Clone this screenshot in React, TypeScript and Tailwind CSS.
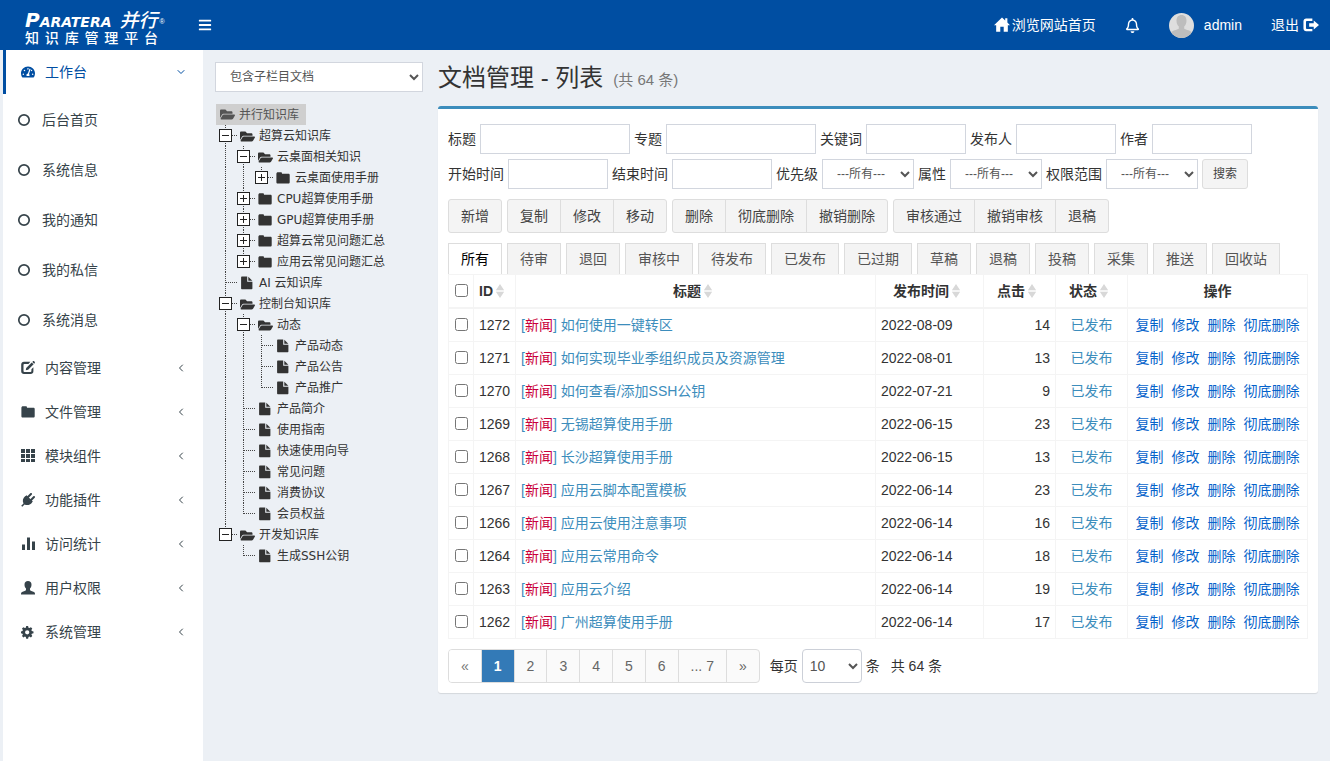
import { useState } from "react";
import type { ReactNode } from "react";
import { FaBars, FaFolderOpen, FaRegBell, FaTachometerAlt } from "react-icons/fa";
import { FiChevronDown, FiChevronLeft } from "react-icons/fi";

interface TreeNode {
  label: string;
  open?: boolean;
  folder?: boolean;
  children?: TreeNode[];
}

interface Doc {
  id: number;
  title: string;
  date: string;
  hits: number;
}

const SUB_MENU = ["后台首页", "系统信息", "我的通知", "我的私信", "系统消息"];

const TREE: TreeNode[] = [
  {
    label: "超算云知识库",
    folder: true,
    open: true,
    children: [
      {
        label: "云桌面相关知识",
        folder: true,
        open: true,
        children: [{ label: "云桌面使用手册", folder: true }],
      },
      { label: "CPU超算使用手册", folder: true },
      { label: "GPU超算使用手册", folder: true },
      { label: "超算云常见问题汇总", folder: true },
      { label: "应用云常见问题汇总", folder: true },
    ],
  },
  { label: "AI 云知识库" },
  {
    label: "控制台知识库",
    folder: true,
    open: true,
    children: [
      {
        label: "动态",
        folder: true,
        open: true,
        children: [{ label: "产品动态" }, { label: "产品公告" }, { label: "产品推广" }],
      },
      { label: "产品简介" },
      { label: "使用指南" },
      { label: "快速使用向导" },
      { label: "常见问题" },
      { label: "消费协议" },
      { label: "会员权益" },
    ],
  },
  {
    label: "开发知识库",
    folder: true,
    open: true,
    children: [{ label: "生成SSH公钥" }],
  },
];

const BUTTON_GROUPS = [
  ["新增"],
  ["复制", "修改", "移动"],
  ["删除", "彻底删除", "撤销删除"],
  ["审核通过", "撤销审核", "退稿"],
];

const TABS = [
  "所有", "待审", "退回", "审核中", "待发布", "已发布", "已过期",
  "草稿", "退稿", "投稿", "采集", "推送", "回收站",
];

const DOCS: Doc[] = [
  { id: 1272, title: "如何使用一键转区", date: "2022-08-09", hits: 14 },
  { id: 1271, title: "如何实现毕业季组织成员及资源管理", date: "2022-08-01", hits: 13 },
  { id: 1270, title: "如何查看/添加SSH公钥", date: "2022-07-21", hits: 9 },
  { id: 1269, title: "无锡超算使用手册", date: "2022-06-15", hits: 23 },
  { id: 1268, title: "长沙超算使用手册", date: "2022-06-15", hits: 13 },
  { id: 1267, title: "应用云脚本配置模板", date: "2022-06-14", hits: 23 },
  { id: 1266, title: "应用云使用注意事项", date: "2022-06-14", hits: 16 },
  { id: 1264, title: "应用云常用命令", date: "2022-06-14", hits: 18 },
  { id: 1263, title: "应用云介绍", date: "2022-06-14", hits: 19 },
  { id: 1262, title: "广州超算使用手册", date: "2022-06-14", hits: 17 },
];

/* ---------- icons ---------- */

function Icon({ children, size = 14 }: { children: ReactNode; size?: number }) {
  return (
    <svg width={size} height={size} viewBox="0 0 14 14" fill="currentColor" className="shrink-0" aria-hidden="true">
      {children}
    </svg>
  );
}

const EditIcon = () => (
  <Icon>
    <path d="M3 .8h6.400L7.500 2.900H3.400c-.6 0-.9.3-.9.9v6.300c0 .6.3.9.9.9h6.100c.6 0 .9-.3.9-.9V8.300l2-2v4c0 1.700-1.100 2.800-2.800 2.800H3c-1.700 0-2.800-1.100-2.800-2.800V3.600C.2 1.900 1.300.8 3 .8z" />
    <path d="M5.200 6.900 10.700 1.400l1.900 1.900-5.500 5.500-2.300.4z" />
    <path d="M11.300.9l.8-.8h.8l1 1v.8l-.8.8z" />
  </Icon>
);

const FolderIcon = () => (
  <Icon>
    <path d="M.4 2.800C.4 1.900 1 1.300 1.900 1.300h3c.6 0 1.100.5 1.100 1.400h6.400c.8 0 1.300.5 1.300 1.300v7.200c0 .8-.5 1.300-1.300 1.300H1.700c-.8 0-1.300-.5-1.300-1.300z" />
  </Icon>
);

const FileIcon = () => (
  <Icon>
    <path d="M1.800.6h5.400v5.200h5.200v6.800c0 .4-.3.7-.7.7H1.800c-.4 0-.7-.3-.7-.7V1.300c0-.4.3-.7.7-.7z" />
    <path d="M8.300.8l4 4h-4z" />
  </Icon>
);

const GridIcon = () => (
  <Icon>
    <path d="M0 0h4v4H0zM5 0h4v4H5zM10 0h4v4h-4zM0 5h4v4H0zM5 5h4v4H5zM10 5h4v4h-4zM0 10h4v3H0zM5 10h4v3H5zM10 10h4v3h-4z" />
  </Icon>
);

const PlugIcon = () => (
  <Icon>
    <path d="M4.300 3 11 9.700C9 12.200 6 12.700 3.600 11.500L1.300 13.800.2 12.700 2.500 10.400C1.200 7.900 1.800 5 4.300 3z" />
    <path d="M4 3.400 5.600 2.200 11.800 8.400 10.600 10z" />
    <path d="M6.800 4.200 10 1M9.800 7.200 13 4" stroke="currentColor" strokeWidth="2" strokeLinecap="round" />
  </Icon>
);

const StatsIcon = () => (
  <Icon>
    <path d="M1 7.500h3V13H1zM6 .5h3V13H6zM11 4.500h3V13h-3z" />
  </Icon>
);

const UserIcon = () => (
  <Icon>
    <path d="M7 .1c2.200 0 3.500 1.400 3.500 3.600 0 1.500-.6 3-1.500 3.900v1.100c0 .5.3.8.7 1l3.300 1.400c.7.3 1 .9 1 1.600v.9H0v-.9c0-.7.3-1.300 1-1.600l3.300-1.400c.4-.2.700-.5.700-1V7.600C4.100 6.700 3.500 5.200 3.500 3.700 3.500 1.500 4.800.1 7 .1z" />
  </Icon>
);

const CogIcon = () => (
  <Icon>
    <path
      fillRule="evenodd"
      d="M5.200 1h1.900l.4 1.700.9.400 1.500-.9 1.400 1.400-.9 1.500.4.9 1.700.4v1.900l-1.700.4-.4.9.9 1.500-1.400 1.400-1.500-.9-.9.400-.4 1.700H5.200l-.4-1.700-.9-.4-1.500.9L1 11.100l.9-1.500-.4-.9L0 8.300V6.400L1.500 6l.4-.9L1 3.600l1.400-1.400 1.500.9.900-.4zM6.200 5.200a2.150 2.150 0 1 0 0 4.300 2.150 2.150 0 0 0 0-4.300z"
    />
  </Icon>
);

const HomeIcon = () => (
  <Icon size={16}>
    <path d="M7 .4l2.800 2.700V1.200h1.900v3.700L14 7.300h-1.900v5.500H8.500V8.500h-3v4.300H1.900V7.300H0z" />
  </Icon>
);

const LogoutIcon = () => (
  <Icon size={16}>
    <path d="M2.800 1.400h5.400v2H3.400c-.5 0-.8.3-.8.8v5.400c0 .5.3.8.8.8h4.800v2H2.800c-1.400 0-2.400-1-2.400-2.400V3.800c0-1.400 1-2.400 2.400-2.400z" />
    <path d="M5.400 5.500h4V3L14 7l-4.600 4V8.500h-4z" />
  </Icon>
);

const CircleIcon = () => (
  <Icon>
    <circle cx="7" cy="7" r="5.200" fill="none" stroke="currentColor" strokeWidth="1.700" />
  </Icon>
);

function SortIcon() {
  return (
    <svg width="8" height="14" viewBox="0 0 8 14" fill="#d8d8d8" aria-hidden="true">
      <path d="M4 0l4 6H0zM4 14L0 8h8z" />
      <path d="M0 6.500h8v1H0z" fill="#e8e8e8" />
    </svg>
  );
}

function Avatar() {
  return (
    <svg width="25" height="25" viewBox="0 0 25 25" className="rounded-full" aria-hidden="true">
      <rect width="25" height="25" fill="#dedede" />
      <path d="M12.500 2c3.300 0 5 2.400 5 5.800 0 2.200-.9 4.600-2.300 5.800v2.200c1.600 1 6.800 1.800 8.300 4.200V25h-22v-5c1.500-2.400 6.700-3.200 8.300-4.200v-2.200c-1.400-1.200-2.300-3.600-2.300-5.800 0-3.400 1.700-5.800 5-5.800z" fill="#bdbdbd" />
    </svg>
  );
}

const MENU = [
  { label: "内容管理", icon: <EditIcon /> },
  { label: "文件管理", icon: <FolderIcon /> },
  { label: "模块组件", icon: <GridIcon /> },
  { label: "功能插件", icon: <PlugIcon /> },
  { label: "访问统计", icon: <StatsIcon /> },
  { label: "用户权限", icon: <UserIcon /> },
  { label: "系统管理", icon: <CogIcon /> },
];

/* ---------- layout parts ---------- */

function Logo() {
  return (
    <a href="#" className="ml-[25px] flex w-[142px] flex-col pt-1 text-white">
      <span className="flex h-[22px] items-baseline font-bold italic">
        <span className="font-['DejaVu_Sans'] text-[20px] leading-6">P</span>
        <span className="font-['DejaVu_Sans'] text-[14px] leading-6">ARATERA</span>
        <span className="ml-2 text-[19px] leading-6 font-medium">并行</span>
        <sup className="ml-0.5 text-[7px] font-normal not-italic">®</sup>
      </span>
      <span className="flex w-[133px] justify-between text-[14px] leading-4 font-medium">
        {[..."知识库管理平台"].map((char) => (
          <span key={char}>{char}</span>
        ))}
      </span>
    </a>
  );
}

function Header() {
  return (
    <header className="flex h-[50px] items-center bg-[#004ea2] text-sm text-white">
      <Logo />
      <button type="button" className="ml-[31px] text-sm" aria-label="菜单">
        <FaBars />
      </button>
      <nav className="ml-auto flex items-center pr-[11px]">
        <a href="#" className="flex items-center gap-0.5">
          <HomeIcon />
          浏览网站首页
        </a>
        <a href="#" className="ml-[29px] text-[15px]" aria-label="通知">
          <FaRegBell />
        </a>
        <a href="#" className="ml-[29px] flex items-center gap-2.5">
          <Avatar />
          admin
        </a>
        <a href="#" className="ml-[29px] flex items-center gap-1">
          退出
          <LogoutIcon />
        </a>
      </nav>
    </header>
  );
}

function Sidebar() {
  return (
    <aside className="w-[203px] shrink-0 border-l-[3px] border-[#ecf0f5] bg-white text-sm text-[#36434a]">
      <a href="#" className="flex h-11 items-center border-l-[3px] border-[#004ea2] pr-4 pl-[15px] text-[#004ea2]">
        <FaTachometerAlt className="shrink-0" />
        <span className="ml-2.5">工作台</span>
        <FiChevronDown className="ml-auto text-xs" />
      </a>
      <ul className="my-px">
        {SUB_MENU.map((label) => (
          <li key={label}>
            <a href="#" className="flex h-[50px] items-center gap-[11px] pl-3.5">
              <CircleIcon />
              {label}
            </a>
          </li>
        ))}
      </ul>
      <ul>
        {MENU.map((item) => (
          <li key={item.label}>
            <a href="#" className="flex h-11 items-center gap-2.5 pr-4 pl-[18px]">
              {item.icon}
              {item.label}
              <FiChevronLeft className="ml-auto text-xs" />
            </a>
          </li>
        ))}
      </ul>
    </aside>
  );
}

function NodeIcon({ node }: { node: TreeNode }) {
  if (node.open) return <FaFolderOpen className="size-[15px]" />;
  return node.folder ? <FolderIcon /> : <FileIcon />;
}

interface TreeRowProps {
  node: TreeNode;
  // one entry per ancestor level, true where its connector continues
  lines: boolean[];
  last: boolean;
}

function TreeRow({ node, lines, last }: TreeRowProps) {
  return (
    <li>
      <a href="#" className="flex h-[21px] items-center">
        {lines.map((line, i) => (
          <svg key={i} width="18" height="21" className="shrink-0" aria-hidden="true">
            {line && <path d="M9.500 0v21" stroke="#444" strokeDasharray="1 1" />}
          </svg>
        ))}
        <svg width="24" height="21" className="shrink-0" aria-hidden="true">
          <path d={last ? "M9.500 0v11" : "M9.500 0v21"} stroke="#444" strokeDasharray="1 1" />
          <path d="M10 10.500h11" stroke="#444" strokeDasharray="1 1" />
          {node.folder && (
            <>
              <rect x="3.500" y="4.500" width="12" height="12" fill="#fff" stroke="#222" />
              <path d={node.open ? "M6 10.500h7" : "M6 10.500h7M9.500 7v7"} stroke="#222" />
            </>
          )}
        </svg>
        <span className="mr-1 flex w-[15px] shrink-0 pt-px">
          <NodeIcon node={node} />
        </span>
        <span className="whitespace-nowrap">{node.label}</span>
      </a>
      {node.children && (
        <ul>
          {node.children.map((child, i) => (
            <TreeRow
              key={child.label}
              node={child}
              lines={[...lines, !last]}
              last={i === node.children!.length - 1}
            />
          ))}
        </ul>
      )}
    </li>
  );
}

function CategoryTree() {
  return (
    <div className="w-[208px] shrink-0 pt-3">
      <select
        aria-label="栏目范围"
        className="h-[30px] w-full border border-[#d2d6de] bg-white pl-2.5 text-xs text-[#555]"
      >
        <option>包含子栏目文档</option>
      </select>
      <div className="mt-3 ml-px font-['DejaVu_Sans','Noto_Sans_CJK_SC',sans-serif] text-xs text-[#333]">
        <a href="#" className="flex h-[21px] w-[90px] items-center gap-1 bg-[#cfcfcf] pl-1 whitespace-nowrap text-[#555]">
          <FaFolderOpen className="size-[15px] shrink-0" />
          并行知识库
        </a>
        <ul>
          {TREE.map((node, i) => (
            <TreeRow key={node.label} node={node} lines={[]} last={i === TREE.length - 1} />
          ))}
        </ul>
      </div>
    </div>
  );
}

function TextField({ label, wide = false }: { label: string; wide?: boolean }) {
  return (
    <label className="flex items-center gap-1">
      {label}
      <input
        type="text"
        className={`h-[30px] border border-[#d2d6de] bg-white px-2.5 text-xs ${wide ? "w-[150px]" : "w-[100px]"}`}
      />
    </label>
  );
}

function SelectField({ label }: { label: string }) {
  return (
    <label className="flex items-center gap-1">
      {label}
      <select className="h-[30px] w-[92px] border border-[#d2d6de] bg-white pl-2.5 text-xs text-[#555]">
        <option>---所有---</option>
      </select>
    </label>
  );
}

function SearchForm() {
  return (
    <form className="space-y-[5px]">
      <div className="flex flex-wrap gap-1">
        <TextField label="标题" wide />
        <TextField label="专题" wide />
        <TextField label="关键词" />
        <TextField label="发布人" />
        <TextField label="作者" />
      </div>
      <div className="flex flex-wrap gap-1">
        <TextField label="开始时间" />
        <TextField label="结束时间" />
        <SelectField label="优先级" />
        <SelectField label="属性" />
        <SelectField label="权限范围" />
        <button
          type="button"
          className="h-[30px] rounded-[3px] border border-[#ddd] bg-[#f4f4f4] px-2.5 text-xs text-[#444]"
        >
          搜索
        </button>
      </div>
    </form>
  );
}

function Toolbar() {
  return (
    <div className="mt-2.5 flex flex-wrap gap-[5px]">
      {BUTTON_GROUPS.map((group) => (
        <div
          key={group[0]}
          className="flex h-[34px] divide-x divide-[#ddd] overflow-hidden rounded-[3px] border border-[#ddd] bg-[#f4f4f4] text-[#444]"
        >
          {group.map((label) => (
            <button key={label} type="button" className="px-3">
              {label}
            </button>
          ))}
        </div>
      ))}
    </div>
  );
}

function DocTable() {
  const [checked, setChecked] = useState<number[]>([]);

  const toggle = (id: number) => {
    setChecked((prev) => (prev.includes(id) ? prev.filter((x) => x !== id) : [...prev, id]));
  };

  const head = "border border-b-2 border-[#f4f4f4] p-0 h-[33px]";
  const cell = "border border-[#f4f4f4] px-[5px] py-1.5";

  return (
    <table className="w-full table-fixed border-collapse leading-5">
      <colgroup>
        <col className="w-[25px]" />
        <col className="w-[42px]" />
        <col />
        <col className="w-[108px]" />
        <col className="w-[72px]" />
        <col className="w-[72px]" />
        <col className="w-[180px]" />
      </colgroup>
      <thead>
        <tr>
          <th className={head}>
            <input
              type="checkbox"
              aria-label="全选"
              className="mx-auto block size-[13px]"
              checked={checked.length === DOCS.length}
              onChange={(e) => setChecked(e.target.checked ? DOCS.map((d) => d.id) : [])}
            />
          </th>
          {["ID", "标题", "发布时间", "点击", "状态"].map((label) => (
            <th key={label} className={head}>
              <span className="flex items-center justify-center gap-[3px] pt-px pr-1.5">
                {label}
                <SortIcon />
              </span>
            </th>
          ))}
          <th className={head}>操作</th>
        </tr>
      </thead>
      <tbody>
        {DOCS.map((doc) => (
          <tr key={doc.id}>
            <td className="border border-[#f4f4f4] p-0">
              <input
                type="checkbox"
                aria-label={doc.title}
                className="mx-auto block size-[13px]"
                checked={checked.includes(doc.id)}
                onChange={() => toggle(doc.id)}
              />
            </td>
            <td className={cell}>{doc.id}</td>
            <td className={cell}>
              <a href="#" className="text-[#3c8dbc]">
                [<span className="text-[#c9003c]">新闻</span>]
              </a>{" "}
              <a href="#" className="text-[#3c8dbc]">
                {doc.title}
              </a>
            </td>
            <td className={cell}>{doc.date}</td>
            <td className={`${cell} text-right`}>{doc.hits}</td>
            <td className={`${cell} text-center text-[#3c8dbc]`}>已发布</td>
            <td className={cell}>
              <div className="flex justify-center gap-2 text-[#0563cb]">
                {["复制", "修改", "删除", "彻底删除"].map((action) => (
                  <a key={action} href="#" className="whitespace-nowrap">
                    {action}
                  </a>
                ))}
              </div>
            </td>
          </tr>
        ))}
      </tbody>
    </table>
  );
}

function Pagination() {
  return (
    <div className="mt-2.5 flex items-center">
      <div className="flex h-[34px] divide-x divide-[#ddd] overflow-hidden rounded-[4px] border border-[#ddd] bg-[#fafafa] text-[#666]">
        {["«", "1", "2", "3", "4", "5", "6", "... 7", "»"].map((page) => (
          <button
            key={page}
            type="button"
            className={
              page === "1"
                ? "bg-[#337ab7] px-3 font-bold text-white"
                : page === "«"
                  ? "bg-white px-3 text-[#777]"
                  : "px-3"
            }
          >
            {page}
          </button>
        ))}
      </div>
      <label className="ml-2.5 flex items-center gap-1">
        每页
        <select className="h-[34px] w-[60px] rounded-[4px] border border-[#ccd0d8] bg-white pl-[3px] text-[#555]">
          <option>10</option>
        </select>
        条
      </label>
      <span className="ml-[11px]">共 64 条</span>
    </div>
  );
}

export default function App() {
  const [tab, setTab] = useState("所有");

  return (
    <div className="flex min-h-screen flex-col bg-[#ecf0f5] font-['Liberation_Sans','Noto_Sans_CJK_SC',sans-serif] text-sm text-[#333]">
      <Header />
      <div className="flex grow">
        <Sidebar />
        <div className="flex min-w-0 grow items-start gap-[15px] px-3">
          <CategoryTree />
          <main className="min-w-0 grow">
            <h1 className="flex h-14 items-center gap-2.5 text-2xl">
              文档管理 - 列表
              <small className="pt-1 text-[15px] text-[#777]">(共 64 条)</small>
            </h1>
            <section className="rounded-[3px] border-t-[3px] border-[#3c8dbc] bg-white px-2.5 pt-[15px] pb-2.5 shadow-[0_1px_1px_rgba(0,0,0,0.1)]">
              <SearchForm />
              <Toolbar />
              <div className="mt-2.5 flex flex-wrap gap-[5px]" role="tablist">
                {TABS.map((name) => (
                  <button
                    key={name}
                    type="button"
                    role="tab"
                    aria-selected={tab === name}
                    onClick={() => setTab(name)}
                    className={`h-[31px] border border-b-0 border-[#ddd] px-3 ${
                      tab === name ? "bg-white text-black" : "bg-[#f4f4f4] text-[#555]"
                    }`}
                  >
                    {name}
                  </button>
                ))}
              </div>
              <DocTable />
              <Pagination />
            </section>
          </main>
        </div>
      </div>
    </div>
  );
}
